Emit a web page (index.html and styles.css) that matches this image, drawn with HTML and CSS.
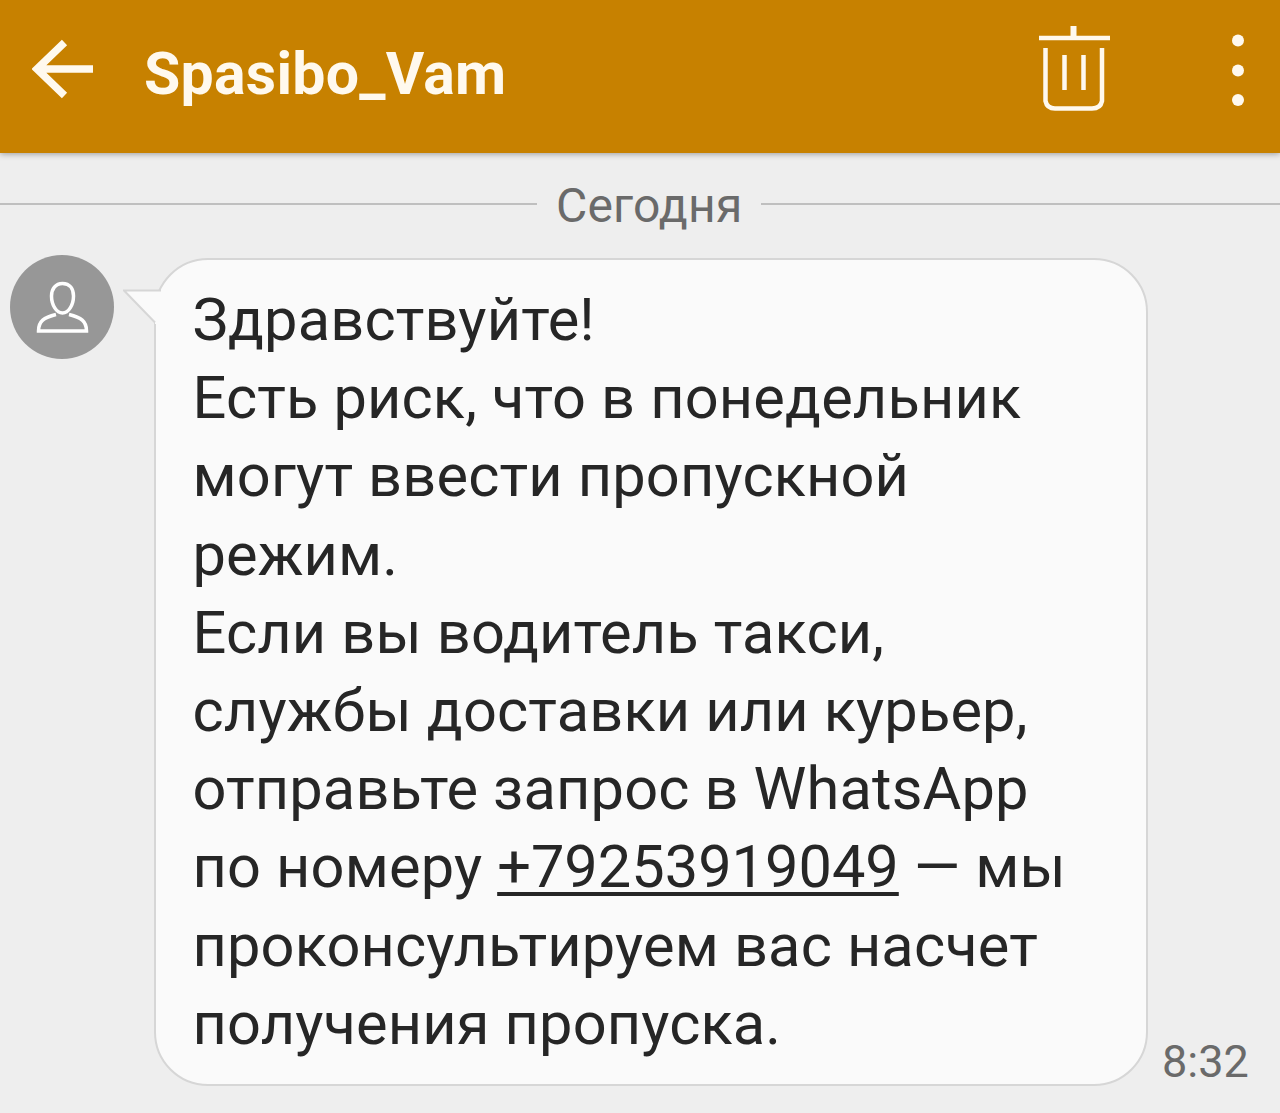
FILE: index.html
```html
<!DOCTYPE html>
<html lang="ru">
<head>
  <meta charset="utf-8">
  <meta name="viewport" content="width=device-width, initial-scale=1.0">
  <title>Spasibo_Vam</title>
  <link rel="stylesheet" href="styles.css">
</head>
<body>

<header class="toolbar">
  <svg class="icon-back" viewBox="0 0 62 60" width="62" height="60">
    <path d="M32.500 3.500 L5 30 L32.500 56.500 M5 30 H61"/>
  </svg>
  <h1 class="title">Spasibo_Vam</h1>
  <svg class="icon-trash" viewBox="0 0 72 86" width="72" height="86">
    <path class="thick" d="M35.500 0 V12"/>
    <path d="M1 12 H72 M7.500 22 V75 Q9 82.500 17 82.500 H54 Q62.500 82.500 64 75 V22 M26.500 29 V64 M45.500 29 V64"/>
  </svg>
  <svg class="icon-more" viewBox="0 0 14 76" width="14" height="76">
    <circle cx="7" cy="7.500" r="6"/>
    <circle cx="7" cy="37.500" r="6"/>
    <circle cx="7" cy="67" r="6"/>
  </svg>
</header>

<main class="chat">
  <div class="day"><span>Сегодня</span></div>

  <div class="message">
    <svg class="avatar" viewBox="0 0 104 104" width="104" height="104">
      <circle cx="52" cy="52" r="52"/>
      <path d="M52.500 28.500 C60 28.500 63.500 34 63.500 41 C63.500 50 58.500 58 52.500 58 C46.500 58 41.500 50 41.500 41 C41.500 34 45.500 28.500 52.500 28.500 Z"/>
      <path d="M46 59.500 C34 62.500 28.500 66 28.500 76 H76.500 C76.500 66 71 62.500 59 59.500"/>
    </svg>
    <div class="bubble">
      <svg class="tail" viewBox="0 0 42 40" width="42" height="40">
        <path class="fill" d="M1 7 H37.500 L42 0 V40 H32 V38 Z"/>
        <path class="edge" d="M38 6.500 H1 L32 38.500"/>
      </svg>
      <p class="text">
        <span class="line">Здравствуйте!</span>
        <span class="line">Есть риск, что в понедельник</span>
        <span class="line">могут ввести пропускной</span>
        <span class="line">режим.</span>
        <span class="line">Если вы водитель такси,</span>
        <span class="line">службы доставки или курьер,</span>
        <span class="line">отправьте запрос в WhatsApp</span>
        <span class="line">по номеру <a class="phone" href="tel:+79253919049">+79253919049</a> — мы</span>
        <span class="line">проконсультируем вас насчет</span>
        <span class="line">получения пропуска.</span>
      </p>
    </div>
    <time class="time">8:32</time>
  </div>
</main>

</body>
</html>
```

FILE: styles.css
```css
* { box-sizing: border-box; }
body { margin: 0; height: 1113px; overflow: hidden; background: #eee; font-family: Roboto, "Liberation Sans", sans-serif; }

.toolbar { display: flex; align-items: flex-start; height: 153px; padding: 0 35px 0 32px; background: #c78100; box-shadow: 0 1px 6px rgba(0, 0, 0, .35); }
.toolbar svg { flex: none; fill: none; stroke: #fff9ee; stroke-width: 4.5; }
.toolbar .icon-back { margin-top: 39px; stroke-width: 7.5; }
.toolbar .icon-trash { margin-top: 26px; margin-left: auto; }
.toolbar .icon-trash .thick { stroke-width: 6; }
.toolbar .icon-more { margin-top: 33px; margin-left: 121px; fill: #fff9ee; stroke: none; }
.title { margin: 39px 0 0 50px; color: #fff9ee; font-size: 59px; font-weight: 700; line-height: 70px; letter-spacing: .25px; }

.day { display: flex; align-items: center; gap: 19px; height: 102px; color: #6a6a6a; font-size: 48px; line-height: 60px; }
.day span { padding-top: 4px; letter-spacing: .2px; }
.day::before, .day::after { content: ""; height: 2px; background: #bfbfbf; }
.day::before { flex: none; width: 537px; }
.day::after { flex: 1; }

.message { display: flex; align-items: flex-start; }
.avatar { flex: none; margin-left: 10px; }
.avatar circle { fill: #979797; }
.avatar path { fill: none; stroke: #fff; stroke-width: 3.5; }
.bubble { position: relative; flex: none; width: 994px; height: 828px; margin: 3px 0 0 40px; padding: 21px 36.500px; background: #fafafa; border: 2px solid #d6d6d6; border-radius: 54px; }
.tail { position: absolute; top: 24px; left: -33px; }
.tail .fill { fill: #fafafa; }
.tail .edge { fill: none; stroke: #d6d6d6; stroke-width: 2; }
.text { margin: 0; color: #262626; font-size: 59.500px; line-height: 78.200px; letter-spacing: .17px; }
.line { display: block; white-space: nowrap; }
.phone { color: inherit; letter-spacing: 0; text-decoration-thickness: 4px; text-underline-offset: 5px; text-decoration-skip-ink: none; }
.time { align-self: flex-end; margin-left: 14px; color: #6a6a6a; font-size: 45px; line-height: 48px; }
```
